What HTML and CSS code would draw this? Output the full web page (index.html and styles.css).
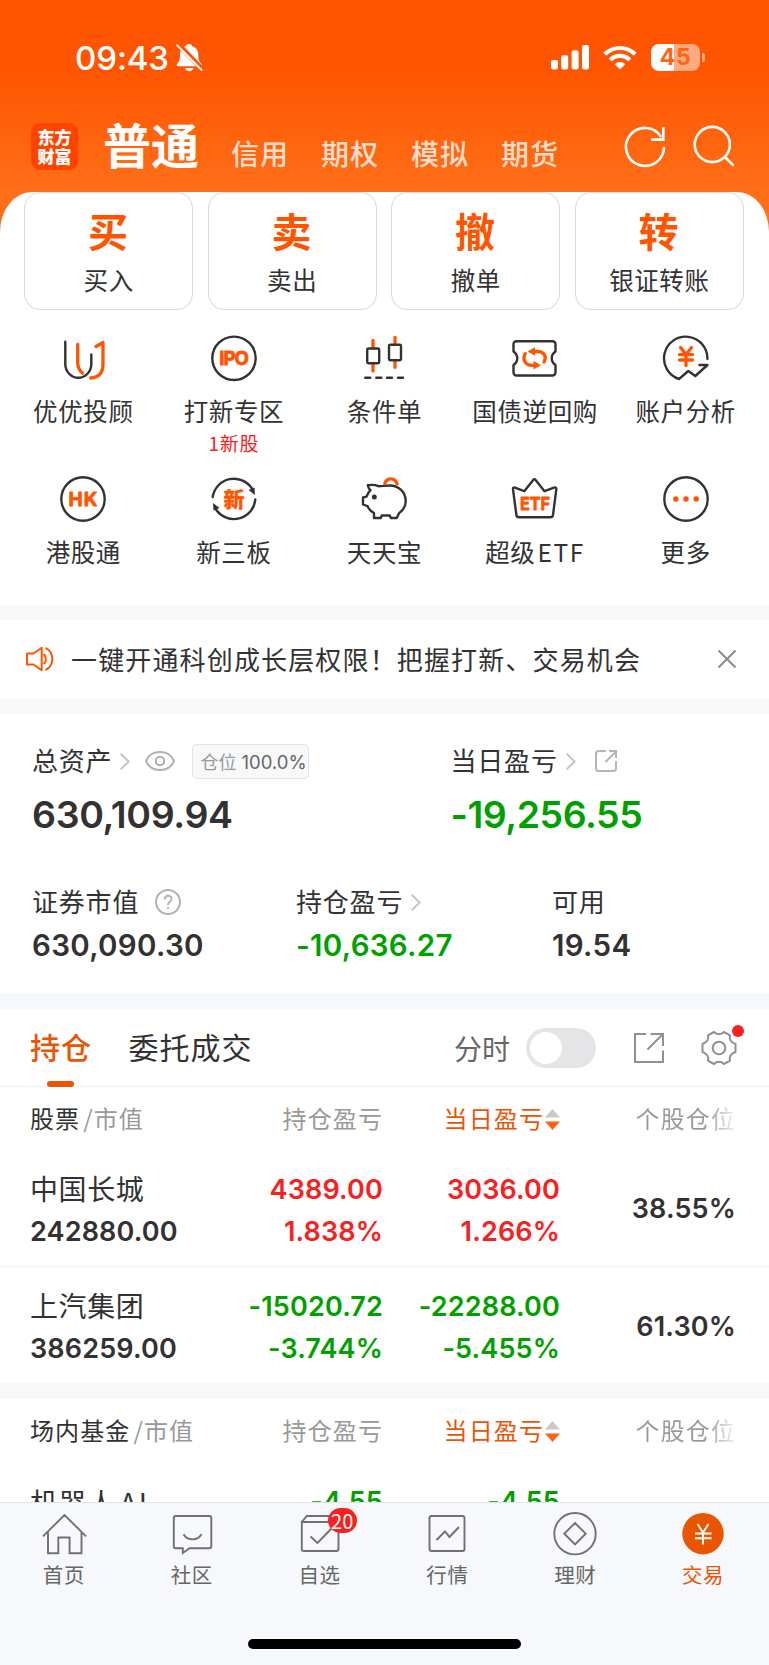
FILE: index.html
```html
<!DOCTYPE html>
<html lang="zh-CN">
<head>
<meta charset="utf-8">
<title>交易</title>
<link rel="stylesheet" href="styles.css">
</head>
<body>
<div class="app">
  <header class="hero">
    <div class="status">
      <span class="clock">09:43</span>
      <svg class="bell" width="28" height="30" viewBox="0 0 28 30"><path fill="#fff" d="M13 1c1.500 0 2.800.9 3.300 2.200 3.900 1.100 6 4.300 6 8.300 0 5 1 7.300 3.200 9.600.8.900.3 2.200-.9 2.200H2c-1.200 0-1.700-1.300-.9-2.200C3.300 18.800 4 16.500 4 11.500c0-4 2-7.200 5.700-8.300C10.200 1.900 11.500 1 13 1zM9 25h8.500c-.4 2-2.200 3.200-4.200 3.200S9.400 27 9 25z"/><path stroke="#ff5500" stroke-width="5" d="M2 1l25 26"/><path stroke="#fff" stroke-width="2" stroke-linecap="round" d="M1.200 2.400L25.500 27"/></svg>
      <div class="signals">
        <svg width="38" height="26" viewBox="0 0 38 26" fill="#fff"><rect y="15" width="7" height="9.500" rx="2.200"/><rect x="10.200" y="10.300" width="7" height="14.200" rx="2.200"/><rect x="20.600" y="5.300" width="7" height="19.200" rx="2.200"/><rect x="31" width="7" height="24.500" rx="2.200"/></svg>
        <svg class="wifi" width="34" height="26" viewBox="0 0 34 26"><g fill="none" stroke="#fff" stroke-width="4.200"><path d="M1.800 9.300a21.500 21.500 0 0 1 30.400 0"/><path d="M7.300 15a13.700 13.700 0 0 1 19.400 0"/></g><path fill="#fff" d="M17 24.600l-5.200-5.300a7.300 7.300 0 0 1 10.400 0z"/></svg>
        <div class="battery"><span>45</span></div>
        <i class="nub"></i>
      </div>
    </div>
    <div class="topnav">
      <div class="logo"><span>东方财富</span></div>
      <b class="current">普通</b>
      <nav class="modes"><span>信用</span><span>期权</span><span>模拟</span><span>期货</span></nav>
      <svg class="refresh" width="44" height="44" viewBox="0 0 44 44" fill="none" stroke="#fff" stroke-width="2.600"><path d="M40 22A19 19 0 1 1 37.200 12"/><path d="M39.300 2v12.600H27"/></svg>
      <svg class="search" width="44" height="44" viewBox="0 0 44 44" fill="none" stroke="#fff" stroke-width="2.600"><circle cx="20.300" cy="20.500" r="17.600"/><path d="M32.500 32.500l9 9.200"/></svg>
    </div>
  </header>

  <main class="panel">
    <div class="cards">
      <div class="card"><b>买</b><span>买入</span></div>
      <div class="card"><b>卖</b><span>卖出</span></div>
      <div class="card"><b>撤</b><span>撤单</span></div>
      <div class="card"><b>转</b><span>银证转账</span></div>
    </div>

    <div class="tools">
      <div class="tool"><svg class="ico" viewBox="0 0 48 48"><path class="k" d="M6.300 7.800V30a13 13.800 0 0 0 26 0V20.500"/><g class="o"><path d="M18.700 10.500V28c0 5 1.500 8.500 4.800 11.200"/><path d="M37 12.500l7-4V30c0 8.500-4 13.500-12.300 14"/></g></svg><span>优优投顾</span></div>
      <div class="tool"><svg class="ico" viewBox="0 0 48 48"><circle class="k" cx="24" cy="24.300" r="21.700"/><text class="glyph" x="24" y="31.200" font-size="18.500" textLength="29.500">IPO</text></svg><span>打新专区</span><em>1新股</em></div>
      <div class="tool"><svg class="ico" viewBox="0 0 48 48"><path class="w" d="M13 6.500v7.500M13 30v7M35 3.300V10M35 27v6.300"/><rect class="k" x="7.200" y="14.500" width="12" height="14.700" rx="1.200"/><rect class="k" x="29" y="10.700" width="12" height="15.500" rx="1.200"/><path class="k" d="M5.300 43.700h5M16.300 43.700h5M27 43.700h5M38 43.700h5"/></svg><span>条件单</span></div>
      <div class="tool"><svg class="ico" viewBox="0 0 48 48"><path class="k" d="M5.500 7.200h36a3 3 0 0 1 3 3V17.500c-5 3.500-5 10 0 13.500V38.500a3 3 0 0 1-3 3h-36a3 3 0 0 1-3-3V31c5-3.500 5-10 0-13.500V10.200a3 3 0 0 1 3-3z"/><path class="w" d="M14.300 19.700c-3.500 6.300.5 11.600 6.700 11.600h3M33 28c3.300-6-.8-10.500-6.500-10.500h-3"/><path fill="#ff5500" d="M24 13.300v8.500l-7.500-4.200zM22.500 27v8.500l7.500-4.200z"/></svg><span>国债逆回购</span></div>
      <div class="tool"><svg class="ico" viewBox="0 0 48 48"><path class="k" d="M45.400 25A21.700 21.700 0 1 0 17 45l9.300-8 7 5L45.500 31h-8"/><path class="w" d="M18.500 13.500l5.500 7 5.500-7M17.500 20.700h13M17.500 26h13M24 21v10.500"/></svg><span>账户分析</span></div>
      <div class="tool"><svg class="ico" viewBox="0 0 48 48"><circle class="k" cx="24" cy="24" r="21.700"/><text class="glyph" x="24" y="31" font-size="19" textLength="29">HK</text></svg><span>港股通</span></div>
      <div class="tool"><svg class="ico" viewBox="0 0 48 48"><path class="k" d="M2.700 22A21.500 21.500 0 0 1 42 13.500M45.300 24.500A21.500 21.500 0 0 1 6 34.500"/><path fill="#323232" d="M38.500 15l6-2.500.5 7.500zM9.500 33l-6 2.500-.5-7.500z"/><text class="glyph cn" x="24" y="31.500" font-size="21">新</text></svg><span>新三板</span></div>
      <div class="tool"><svg class="ico" viewBox="0 0 48 48"><path class="k" d="M18.500 11.200C14.500 9.500 11 9.700 7.800 10.300c.5 2.500 1.500 4 2.700 4.900-2 1.800-3 3.800-4 6.500L3 22.500v7l4.500 1.700C9 34.500 11 36.500 14 38v5h6.800l1-2.500h8l1 2.500h6l2.200-4.800C43.500 35 45.700 31 45.700 26c0-9-7-15.500-16-15.500-4 0-7.500.7-11.200.7z"/><circle cx="14.300" cy="22" r="2.500" fill="#323232"/><path class="w" d="M24.800 8.600c2-6.200 10-6.600 12.300.4"/></svg><span>天天宝</span></div>
      <div class="tool"><svg class="ico" viewBox="0 0 48 48"><path class="k" d="M4 12.600l9.300 3.600L22 5.200q1.400-1.800 2.800 0l8.700 11 9.500-3.600q2.600-.8 2.300 1.700L42 40q-.4 2.200-2.500 2.200H7.800Q5.700 42.200 5.400 40L2 14.300q-.2-2.300 2-1.700z"/><text class="glyph" x="24" y="35" font-size="18" textLength="30" lengthAdjust="spacingAndGlyphs">ETF</text></svg><span>超级<u>ETF</u></span></div>
      <div class="tool"><svg class="ico" viewBox="0 0 48 48"><circle class="k" cx="24" cy="24" r="21.700"/><g fill="#ff5500"><circle cx="13.800" cy="24" r="2.700"/><circle cx="24" cy="24" r="2.700"/><circle cx="34.200" cy="24" r="2.700"/></g></svg><span>更多</span></div>
    </div>
  </main>

  <section class="notice">
    <svg width="28" height="26" viewBox="0 0 28 26" fill="none" stroke="#ff5500" stroke-width="2" stroke-linejoin="round"><path d="M1 7.500h6.500L15.700 1.700v22.600L7.500 18.500H1z"/><path d="M17.500 8c3 2 3 8 0 10M19.500 1.800c9 4.500 9 17.900 0 22.400"/></svg>
    <p>一键开通科创成长层权限！把握打新、交易机会</p>
    <svg width="18" height="18" viewBox="0 0 18 18" stroke="#8c8c8c" stroke-width="2"><path d="M.5.500l17 17M17.500.500l-17 17"/></svg>
  </section>

  <section class="assets">
    <div class="totals">
      <div>
        <div class="label"><span>总资产</span><svg class="chev" width="10" height="17" viewBox="0 0 10 17"><path d="M.7.700l8 7.800-8 7.800"/></svg>
          <svg class="eye" width="30" height="20" viewBox="0 0 30 20" fill="none" stroke="#b0b0b0" stroke-width="2"><path d="M1 10C6-2 24-2 29 10 24 22 6 22 1 10z"/><circle cx="15" cy="10" r="4.200"/></svg>
          <span class="pill">仓位 <i>100.0%</i></span></div>
        <div class="big">630,109.94</div>
      </div>
      <div>
        <div class="label"><span>当日盈亏</span><svg class="chev" width="10" height="17" viewBox="0 0 10 17"><path d="M.7.700l8 7.800-8 7.800"/></svg>
          <svg class="share" width="24" height="24" viewBox="0 0 24 24" fill="none" stroke="#b5b5b5" stroke-width="2"><path d="M12 2H4.500A2.500 2.500 0 0 0 2 4.500v15A2.500 2.500 0 0 0 4.500 22h15a2.500 2.500 0 0 0 2.500-2.500V12M11.500 13L22 2.500M15 2h7v7"/></svg></div>
        <div class="big green">-19,256.55</div>
      </div>
    </div>
    <div class="parts">
      <div><div class="label"><span>证券市值</span><svg class="help" width="26" height="26" viewBox="0 0 26 26" fill="none" stroke="#b0b0b0" stroke-width="1.900"><circle cx="13" cy="13" r="12"/><path d="M9.800 10.500c0-5 6.700-4.700 6.700-.7 0 2.500-3.500 3-3.500 6.200M13 18v2"/></svg></div><div class="mid">630,090.30</div></div>
      <div><div class="label"><span>持仓盈亏</span><svg class="chev" width="10" height="17" viewBox="0 0 10 17"><path d="M.7.700l8 7.800-8 7.800"/></svg></div><div class="mid green">-10,636.27</div></div>
      <div><div class="label"><span>可用</span></div><div class="mid">19.54</div></div>
    </div>
  </section>

  <section class="holdings">
    <div class="tabs">
      <span class="tab on">持仓</span><span class="tab">委托成交</span>
      <span class="minute">分时</span><span class="switch"></span>
      <svg class="export" width="32" height="32" viewBox="0 0 32 32" fill="none" stroke="#909090" stroke-width="2"><path d="M13 2H2v28h28V18.500M14.500 17.500L29.500 2.500M17.500 2H30v12"/></svg>
      <div class="gear"><svg width="36" height="36" viewBox="0 0 36 36" fill="none" stroke="#909090" stroke-width="2" stroke-linejoin="round"><circle cx="18" cy="18" r="6.300"/><path d="M13 2q2.200 2.200 5 2.200T23 2l6 3.300q-.8 3 .6 5.200t4.900 3.500v8q-3.500 1.300-4.900 3.500T29 30.700L23 34q-2.200-2.200-5-2.200T13 34l-6-3.300q.8-3-.6-5.200T1.500 22v-8q3.500-1.300 4.900-3.500T7 5.300z"/></svg><i></i></div>
    </div>
    <div class="row head"><span><b>股票</b><s>/</s>市值</span><span>持仓盈亏</span><span class="sort">当日盈亏<svg width="15" height="21" viewBox="0 0 15 21"><path fill="#c8c8c8" d="M7.500 0L15 8.500H0z"/><path fill="#fa6414" d="M7.500 21L0 12.500h15z"/></svg></span><span class="fade">个股仓位</span></div>
    <div class="row item"><div class="name"><strong>中国长城</strong><i>242880.00</i></div><div class="red"><i>4389.00</i><i>1.838%</i></div><div class="red"><i>3036.00</i><i>1.266%</i></div><div class="share-of"><i>38.55%</i></div></div>
    <div class="row item last"><div class="name"><strong>上汽集团</strong><i>386259.00</i></div><div class="green"><i>-15020.72</i><i>-3.744%</i></div><div class="green"><i>-22288.00</i><i>-5.455%</i></div><div class="share-of"><i>61.30%</i></div></div>
  </section>

  <section class="funds">
    <div class="row head"><span><b>场内基金</b><s>/</s>市值</span><span>持仓盈亏</span><span class="sort">当日盈亏<svg width="15" height="21" viewBox="0 0 15 21"><path fill="#c8c8c8" d="M7.500 0L15 8.500H0z"/><path fill="#fa6414" d="M7.500 21L0 12.500h15z"/></svg></span><span class="fade">个股仓位</span></div>
    <div class="row item cut"><div><strong>机器人<u>AI</u></strong></div><div class="green"><i>-4.55</i></div><div class="green"><i>-4.55</i></div><div></div></div>
  </section>

  <footer class="bar">
    <nav>
      <div><svg viewBox="0 0 48 48"><path d="M3 26.300L24.500 5 46 26.300M8 21.500V43.300h10.300V27.500h11.300v15.800H41.500V21.500"/></svg><span>首页</span></div>
      <div><svg viewBox="0 0 48 48"><path d="M7.800 6h33.500a2 2 0 0 1 2 2v28.300a2 2 0 0 1-2 2H21.500L14.800 43v-4.700h-7a2 2 0 0 1-2-2V8a2 2 0 0 1 2-2zM15.500 24.300c4 6.800 14 6.800 18 0"/></svg><span>社区</span></div>
      <div><svg viewBox="0 0 48 48"><path d="M5.800 12h36.700v27a2 2 0 0 1-2 2H7.800a2 2 0 0 1-2-2zM5.800 12l5-6h30M14.500 26.500l7 6.500L36 18"/></svg><em>20</em><span>自选</span></div>
      <div><svg viewBox="0 0 48 48"><rect x="6.500" y="6" width="35" height="35" rx="2"/><path d="M13.500 30l8.500-8.500 4.500 5.500L36 17"/></svg><span>行情</span></div>
      <div><svg viewBox="0 0 48 48"><circle cx="24" cy="23.700" r="20.700"/><path d="M24 13l10.700 10.700L24 34.500 13.300 23.700z"/></svg><span>理财</span></div>
      <div class="active"><svg viewBox="0 0 48 48"><circle cx="24" cy="23.700" r="20.700" fill="#ea5504" stroke="none"/><path stroke="#fff" d="M18.500 14l5.500 8.500 5.500-8.500M16 23.500h16.500M16 28.300h16.500M24 23v11.500"/></svg><span>交易</span></div>
    </nav>
    <div class="home"></div>
  </footer>
</div>
</body>
</html>
```

FILE: styles.css
```css
* { box-sizing: border-box; }
body { margin: 0; font-family: "Noto Sans CJK SC", sans-serif; color: #323232; background: #fff; }
b, i, em, s, u { font-style: normal; text-decoration: none; }
svg { display: block; flex: none; }
.app { width: 769px; height: 1665px; overflow: hidden; display: flex; flex-direction: column; background: #f6f8fa; }
.app > * { flex: none; }
.green { color: #00a000; }
.red { color: #fa2020; }

.hero { height: 235px; margin-bottom: -43px; background: linear-gradient(#ff5500 70px, #ff6f18 192px); color: #fff; }
.status { height: 115px; padding: 0 64px 0 75px; display: flex; align-items: center; }
.clock { font: 500 33px/40px Inter, sans-serif; letter-spacing: -.1px; }
.bell { margin-left: 7px; }
.signals { margin-left: auto; display: flex; align-items: center; }
.wifi { margin: 0 14px; }
.battery { width: 49px; height: 27px; border-radius: 8px; background: linear-gradient(90deg, #fff 23px, #ffaa80 23px); text-align: center; font: 700 23px/27px Inter, sans-serif; color: #ff6410; letter-spacing: .6px; }
.nub { width: 3px; height: 9px; margin-left: 2px; border-radius: 0 4px 4px 0; background: #ffaa80; }
.topnav { height: 76px; padding-left: 31px; display: flex; align-items: flex-start; white-space: nowrap; }
.logo { width: 47px; height: 47px; margin-top: 8px; padding: 4px 6.500px 0; border-radius: 9px; background: #ff4400; font-weight: 900; font-size: 17px; line-height: 19px; white-space: normal; }
.current { width: 97px; margin-left: 25px; font-size: 48px; line-height: 56px; }
.modes { margin: 20px 0 0 31px; display: flex; gap: 32px; font-size: 28px; line-height: 36px; font-weight: 500; letter-spacing: 1px; color: rgba(255,255,255,.8); }
.refresh { margin: 10px 0 0 65px; }
.search { margin: 9px 0 0 24px; }

.panel { height: 413px; background: #fff; border-radius: 32px 32px 0 0 / 40px 40px 0 0; }
.cards { height: 118px; padding: 0 25px 0 24px; display: grid; grid-template-columns: repeat(4, 1fr); gap: 14.300px; }
.card { border: 1.500px solid #d8d8d8; border-radius: 16px; display: flex; flex-direction: column; align-items: center; }
.card b { margin: 10px 1.500px 0 0; font-size: 40px; line-height: 54px; color: #ff5500; }
.card span { margin-top: 6px; font-size: 24.500px; line-height: 34px; letter-spacing: .6px; }
.tools { padding: 24px 8px; display: grid; grid-template-columns: repeat(5, 1fr); grid-auto-rows: 141px; }
.tool { display: flex; flex-direction: column; align-items: center; white-space: nowrap; }
.ico { width: 48px; height: 48px; }
.tool span { margin-top: 12px; font-size: 24.500px; line-height: 34px; letter-spacing: .6px; }
.tool u { margin-left: 2px; letter-spacing: 1.600px; }
.tool em { font-size: 19px; line-height: 26px; margin-top: 2px; color: #fa2020; letter-spacing: .8px; }
.k, .o, .w { fill: none; stroke: #323232; stroke-width: 2.400; stroke-linecap: round; stroke-linejoin: round; }
.o, .w { stroke: #ff5500; stroke-width: 3.300; }
.glyph { fill: #ff5500; stroke: #ff5500; stroke-width: .8; stroke-linejoin: round; font-family: Inter, sans-serif; font-weight: 700; text-anchor: middle; }
.glyph.cn { stroke-width: .3; font-family: "Noto Sans CJK SC", sans-serif; font-weight: 900; }

.notice { height: 78px; margin-top: 15px; padding: 0 33px 0 26px; background: #fff; display: flex; align-items: center; }
.notice p { flex: 1; margin: -1px 0 0 17px; font-size: 26px; line-height: 38px; letter-spacing: 1.150px; white-space: nowrap; }

.assets { height: 279px; margin-top: 16px; padding: 28px 32px 0; background: #fff; }
.totals { display: grid; grid-template-columns: 418.500px 1fr; height: 141px; }
.parts { display: grid; grid-template-columns: 264px 256px 1fr; }
.label { height: 38px; display: flex; align-items: center; font-size: 26px; letter-spacing: .8px; white-space: nowrap; }
.label > span:first-child { margin-top: -3px; }
.chev { margin-left: 8px; fill: none; stroke: #c4c4c4; stroke-width: 1.900; }
.eye { margin-left: 15px; }
.pill { width: 117px; height: 35px; margin-left: 17px; padding-left: 7px; border: 1.500px solid #e2e3e6; border-radius: 5px; background: #f7f8fa; color: #999; font-size: 18px; line-height: 32px; letter-spacing: 0; }
.pill i { margin-left: 1px; font: 400 18.500px/32px Inter, sans-serif; color: #666; }
.share { margin-left: 18px; }
.help { margin-left: 16px; }
.big { font: 600 37.500px/50px Inter, sans-serif; letter-spacing: -.35px; margin-top: 10px; white-space: nowrap; }
.big.green { letter-spacing: -.5px; }
.mid { font: 600 29.500px/40px Inter, sans-serif; letter-spacing: .3px; margin-top: 4px; white-space: nowrap; }

.holdings { height: 374px; margin-top: 16px; background: #fff; }
.tabs { height: 78px; padding-left: 30px; border-bottom: 1px solid #eeeff2; display: flex; align-items: center; }
.tab { height: 78px; font-size: 30px; line-height: 74px; letter-spacing: 1px; margin-right: 36.500px; }
.tab.on { color: #ea5504; font-weight: 500; display: flex; flex-direction: column; align-items: center; }
.tab.on::after { content: ""; width: 27px; height: 6px; margin: -2px 1px 0 0; border-radius: 3px; background: #ea5504; }
.minute { margin-left: auto; font-size: 28px; line-height: 74px; letter-spacing: 0; color: #666; }
.switch { width: 70px; height: 40px; margin-left: 16px; padding: 4px; border-radius: 20px; background: #e5e5e7; }
.switch::before { content: ""; display: block; width: 32px; height: 32px; border-radius: 50%; background: #fff; }
.export { margin-left: 37px; }
.gear { position: relative; margin: 0 32px 0 36px; }
.gear i { position: absolute; right: -7px; top: -5px; width: 12px; height: 12px; border-radius: 50%; background: #fa2020; }
.row { padding-left: 30px; display: grid; grid-template-columns: 211px 142px 177px 176px; white-space: nowrap; }
.row > :not(:first-child) { text-align: right; justify-self: end; }
.head { height: 63px; padding-bottom: 2px; align-items: center; font-size: 24px; line-height: 34px; letter-spacing: 1.100px; color: #999; }
.head b { font-weight: 400; color: #323232; }
.head s { margin: 0 0 0 3px; font-size: 24px; }
.head .sort { color: #ea5504; display: flex; align-items: center; }
.sort svg { margin: 3px 0 0 1px; }
.fade { background: linear-gradient(90deg, #999 70%, #f4f4f4); -webkit-background-clip: text; background-clip: text; color: transparent; }
.item { height: 117px; border-bottom: 1px solid #eeeff2; align-items: center; }
.item > div { display: flex; flex-direction: column; padding-top: 5px; }
.item > .name { padding-top: 3px; }
.item > .share-of { padding-top: 2px; }
.name i { margin-top: 2px; }
.item strong { font-size: 28px; font-weight: 400; line-height: 42px; letter-spacing: .6px; }
.item u { margin-left: 4px; letter-spacing: 2px; }
.item i { font: 600 27px/42px Inter, sans-serif; letter-spacing: .15px; }
.last { border: 0; }

.funds { height: 103px; margin-top: 16px; background: #fff; overflow: hidden; }
.cut { height: 117px; align-items: start; }
.item.cut > div { padding-top: 19px; }

.bar { height: 163px; border-top: 1px solid #e3e4e7; background: #f7f8fb; }
.bar nav { padding-right: 2px; display: grid; grid-template-columns: repeat(6, 1fr); }
.bar nav div { position: relative; padding-top: 7px; height: 136px; display: flex; flex-direction: column; align-items: center; font-size: 20.500px; line-height: 30px; letter-spacing: .6px; color: #666; }
.bar svg { width: 48px; height: 48px; fill: none; stroke: #707070; stroke-width: 1.900; }
.bar nav span { margin-top: 1px; }
.bar nav .active { color: #ea5504; }
.bar em { position: absolute; left: 72px; top: 5px; width: 29px; height: 25px; border-radius: 13px; background: #fa2020; color: #fff; font-size: 20px; line-height: 25px; letter-spacing: 0; text-align: center; }
.home { width: 273px; height: 10px; margin: 0 auto; border-radius: 5px; background: #000; }
```
